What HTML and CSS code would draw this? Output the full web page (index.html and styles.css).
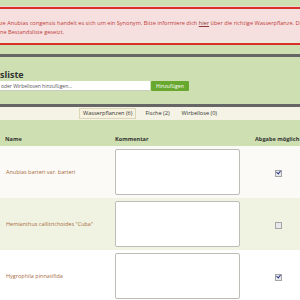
FILE: index.html
```html
<!DOCTYPE html>
<html>

<head>
    <title>Bestandsliste</title>
    <link rel="stylesheet" href="styles.css">
</head>

<body>
    <div class="wrap">
        <div class="notice">
            <p>ze Anubias congensis handelt es sich um ein Synonym. Bitte informiere dich <a href="#">hier</a> über die richtige Wasserpflanze. Di</p>
            <p>ne Bestandsliste gesetzt.</p>
        </div>

        <div class="panel">
            <h2>sliste</h2>
            <form class="add-form">
                <input type="text" placeholder="oder Wirbellosen hinzufügen...">
                <button type="button">Hinzufügen</button>
            </form>
        </div>

        <div class="tabs">
            <span class="tab active">Wasserpflanzen (6)</span>
            <span class="tab">Fische (2)</span>
            <span class="tab">Wirbellose (0)</span>
        </div>

        <table class="stock">
            <colgroup>
                <col class="col-name">
                <col class="col-comment">
                <col class="col-give">
            </colgroup>
            <tr class="head">
                <th>Name</th>
                <th>Kommentar</th>
                <th>Abgabe möglich</th>
            </tr>
            <tr>
                <td class="name">Anubias barteri var. barteri</td>
                <td><textarea></textarea></td>
                <td class="give"><span class="check on"></span></td>
            </tr>
            <tr class="alt">
                <td class="name">Hemianthus callitrichoides "Cuba"</td>
                <td><textarea></textarea></td>
                <td class="give"><span class="check"></span></td>
            </tr>
            <tr>
                <td class="name">Hygrophila pinnatifida</td>
                <td><textarea></textarea></td>
                <td class="give"><span class="check on"></span></td>
            </tr>
        </table>
    </div>
</body>

</html>
```

FILE: styles.css
```css
body {
    margin: 0;
    background-color: #cee0b2;
    font-family: 'Open Sans', sans-serif;
    overflow: hidden;
}

.wrap {
    width: 310px;
}

/* error message */
.notice {
    margin-top: 7px;
    padding: 10px 0 4px;
    background-color: #f5e0df;
    border-top: 2px solid #d8302b;
    border-bottom: 2px solid #ebeadb;
    box-shadow: 0 -1px 0 #f0d6d4, 0 2px 0 #d8302b;
}

.notice p {
    margin: 0;
    font-size: 5.6px;
    line-height: 9px;
    color: #c13b3b;
    white-space: nowrap;
}

.notice a {
    color: #8a3a3a;
}

/* add form */
.panel {
    margin-top: 11px;
    height: 47px;
    border-top: 3px solid #666;
    border-bottom: 3px solid #666;
}

.panel h2 {
    margin: 12px 0 0;
    font-size: 9px;
    line-height: 11px;
    color: #333;
}

.add-form {
    display: flex;
    gap: 1px;
    margin-top: 1px;
}

.add-form input {
    width: 150px;
    height: 10px;
    margin: 0;
    padding: 0 1px;
    box-sizing: border-box;
    border: none;
    border-bottom: 1px solid #c9ccc0;
    font-family: inherit;
    font-size: 5px;
}

.add-form input::placeholder {
    color: #555;
}

.add-form button {
    width: 38px;
    height: 10px;
    padding: 0;
    border: none;
    border-radius: 1px;
    background-color: #69a82f;
    color: #fff;
    font-family: inherit;
    font-size: 5.2px;
}

/* tabs */
.tabs {
    display: flex;
    gap: 6px;
    height: 13px;
    align-items: center;
    padding-left: 79px;
    background-color: #f4f3e5;
}

.tab {
    font-size: 5.6px;
    line-height: 9px;
    color: #333;
    padding: 0 3px;
}

.tab.active {
    background-color: #f7f2df;
    border: 1px solid #dcd6b9;
}

/* table */
.stock {
    width: 302px;
    border-collapse: collapse;
    table-layout: fixed;
}

.col-name {
    width: 113px;
}

.col-comment {
    width: 142px;
}

.col-give {
    width: 47px;
}

.stock th {
    height: 23px;
    padding: 0 0 3px;
    vertical-align: bottom;
    text-align: left;
    font-size: 5.6px;
    line-height: 8px;
    color: #333;
}

.stock th:first-child {
    padding-left: 5px;
}

.stock th:nth-child(2) {
    padding-left: 2px;
}

.stock td {
    height: 52px;
    padding: 0;
    background-color: #fbfaf6;
    vertical-align: middle;
}

.stock tr.alt td {
    background-color: #f1f3e2;
}

.stock tr:last-child td {
    background-color: #fff;
}

.stock td.name {
    padding-left: 6px;
    font-size: 5.5px;
    color: #a76c3f;
}

.stock textarea {
    display: block;
    width: 125px;
    height: 46px;
    margin: 0 0 0 2px;
    box-sizing: border-box;
    border: 1px solid #bdbdb8;
    border-radius: 2px;
    resize: none;
}

.stock td.give {
    text-align: center;
}

.check {
    display: inline-block;
    width: 5px;
    height: 5px;
    border: 1px solid #a5a5a5;
    background-color: #e9e9ec;
    vertical-align: middle;
    position: relative;
}

.check.on::after {
    content: "";
    position: absolute;
    left: 1px;
    top: -1px;
    width: 2px;
    height: 3px;
    border-right: 1px solid #2a3a8c;
    border-bottom: 1px solid #2a3a8c;
    transform: rotate(40deg);
}
```
